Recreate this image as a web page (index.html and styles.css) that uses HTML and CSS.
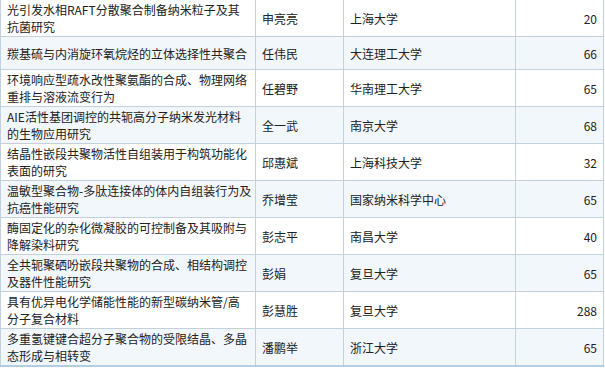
FILE: index.html
```html
<!DOCTYPE html>
<html>

<head>
    <title>项目列表</title>
    <meta charset="utf-8">
    <meta name="viewport" content="width=device-width, initial-scale=1.0">
    <link rel="stylesheet" href="styles.css">
</head>

<body>

    <table class="list">
        <colgroup>
            <col class="c-title">
            <col class="c-name">
            <col class="c-org">
            <col class="c-num">
        </colgroup>
        <tbody>
            <tr>
                <td class="title">光引发水相RAFT分散聚合制备纳米粒子及其<br>抗菌研究</td>
                <td>申亮亮</td>
                <td>上海大学</td>
                <td class="num">20</td>
            </tr>
            <tr class="alt single">
                <td class="title">羰基硫与内消旋环氧烷烃的立体选择性共聚合</td>
                <td>任伟民</td>
                <td>大连理工大学</td>
                <td class="num">66</td>
            </tr>
            <tr>
                <td class="title">环境响应型疏水改性聚氨酯的合成、物理网络<br>重排与溶液流变行为</td>
                <td>任碧野</td>
                <td>华南理工大学</td>
                <td class="num">65</td>
            </tr>
            <tr class="alt">
                <td class="title">AIE活性基团调控的共轭高分子纳米发光材料<br>的生物应用研究</td>
                <td>全一武</td>
                <td>南京大学</td>
                <td class="num">68</td>
            </tr>
            <tr>
                <td class="title">结晶性嵌段共聚物活性自组装用于构筑功能化<br>表面的研究</td>
                <td>邱惠斌</td>
                <td>上海科技大学</td>
                <td class="num">32</td>
            </tr>
            <tr class="alt">
                <td class="title">温敏型聚合物-多肽连接体的体内自组装行为及<br>抗癌性能研究</td>
                <td>乔增莹</td>
                <td>国家纳米科学中心</td>
                <td class="num">65</td>
            </tr>
            <tr>
                <td class="title">酶固定化的杂化微凝胶的可控制备及其吸附与<br>降解染料研究</td>
                <td>彭志平</td>
                <td>南昌大学</td>
                <td class="num">40</td>
            </tr>
            <tr class="alt">
                <td class="title">全共轭聚硒吩嵌段共聚物的合成、相结构调控<br>及器件性能研究</td>
                <td>彭娟</td>
                <td>复旦大学</td>
                <td class="num">65</td>
            </tr>
            <tr>
                <td class="title">具有优异电化学储能性能的新型碳纳米管/高<br>分子复合材料</td>
                <td>彭慧胜</td>
                <td>复旦大学</td>
                <td class="num">288</td>
            </tr>
            <tr class="alt">
                <td class="title">多重氢键键合超分子聚合物的受限结晶、多晶<br>态形成与相转变</td>
                <td>潘鹏举</td>
                <td>浙江大学</td>
                <td class="num">65</td>
            </tr>
        </tbody>
    </table>

</body>

</html>
```

FILE: styles.css
```css
body {
    margin: 0;
    background: #ffffff;
    font-family: "Noto Sans CJK SC", sans-serif;
    font-size: 12px;
    color: #222222;
}

.list {
    width: 603px;
    border-collapse: collapse;
    table-layout: fixed;
    border-bottom: 2px solid #b3cde3;
}

.c-title {
    width: 255px;
}

.c-name {
    width: 88px;
}

.c-org {
    width: 172px;
}

.c-num {
    width: 88px;
}

.list td {
    border: 1px solid #c3d1dd;
    padding: 1px 5px 1px 6px;
    line-height: 17px;
    vertical-align: middle;
    text-align: left;
}

.list td.title {
    white-space: nowrap;
    overflow: hidden;
}

.list tr:first-child td {
    border-top: none;
}

.list tr.single td {
    height: 30px;
}

.list tr.alt td {
    background: #f2f7fc;
}

.list td.num {
    text-align: right;
    padding-right: 6px;
}
```
